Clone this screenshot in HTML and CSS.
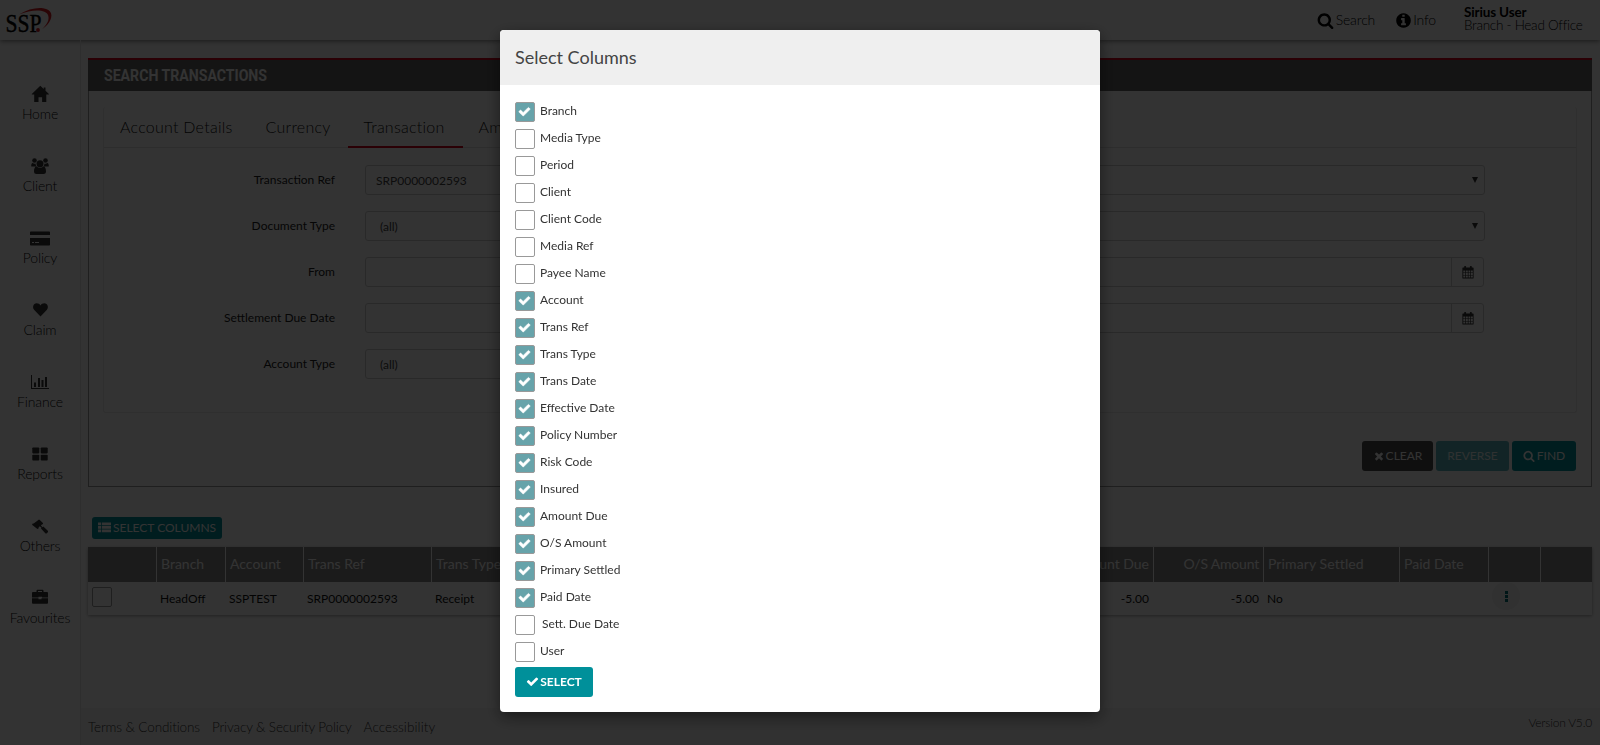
FILE: index.html
```html
<!DOCTYPE html>
<html lang="en">
<head>
<meta charset="utf-8">
<title>Search Transactions</title>
<link rel="stylesheet" href="styles.css">
</head>
<body>
<svg class="defs" width="0" height="0">
  <symbol id="check" viewBox="0 0 1792 1792"><path d="M1671 566q0 40-28 68l-724 724-136 136q-28 28-68 28t-68-28l-136-136-362-362q-28-28-28-68t28-68l136-136q28-28 68-28t68 28l294 295 656-657q28-28 68-28t68 28l136 136q28 28 28 68z"/></symbol>
  <symbol id="times" viewBox="0 0 1792 1792"><path d="M1490 1322q0 40-28 68l-136 136q-28 28-68 28t-68-28l-294-294-294 294q-28 28-68 28t-68-28l-136-136q-28-28-28-68t28-68l294-294-294-294q-28-28-28-68t28-68l136-136q28-28 68-28t68 28l294 294 294-294q28-28 68-28t68 28l136 136q28 28 28 68t-28 68l-294 294 294 294q28 28 28 68z"/></symbol>
  <symbol id="search" viewBox="0 0 1792 1792"><path d="M1216 832q0-185-131.500-316.500t-316.500-131.500-316.500 131.500-131.500 316.500 131.500 316.500 316.500 131.500 316.500-131.500 131.500-316.500zm512 832q0 52-38 90t-90 38q-54 0-90-38l-343-342q-179 124-399 124-143 0-273.500-55.500t-225-150-150-225-55.500-273.500 55.500-273.500 150-225 225-150 273.500-55.500 273.500 55.500 225 150 150 225 55.500 273.500q0 220-124 399l343 343q37 37 37 90z"/></symbol>
  <symbol id="info" viewBox="0 0 1792 1792"><path d="M1152 1376v-160q0-14-9-23t-23-9h-96v-512q0-14-9-23t-23-9h-320q-14 0-23 9t-9 23v160q0 14 9 23t23 9h96v320h-96q-14 0-23 9t-9 23v160q0 14 9 23t23 9h448q14 0 23-9t9-23zm-128-896v-160q0-14-9-23t-23-9h-192q-14 0-23 9t-9 23v160q0 14 9 23t23 9h192q14 0 23-9t9-23zm640 416q0 209-103 385.500t-279.500 279.500-385.500 103-385.500-103-279.500-279.500-103-385.500 103-385.500 279.500-279.500 385.500-103 385.500 103 279.500 279.500 103 385.500z"/></symbol>
  <symbol id="calendar" viewBox="0 0 12 13"><path fill-rule="evenodd" d="M1 1.500h1.200V.6q0-.6.700-.6h.6q.6 0 .6.600v.9h3.800V.6q0-.6.600-.6h.6q.7 0 .7.600v.9H11q.6 0 .6.600v9.800q0 .600-.6.600H1q-.6 0-.6-.6V2.100q0-.6.600-.6zM1.300 4.500v1.900h2V4.500zm2.700 0v1.900h1.800V4.500zm2.500 0v1.900h1.800V4.500zm2.500 0v1.900h1.800V4.500zM1.300 7v1.900h2V7zM4 7v1.900h1.800V7zm2.500 0v1.900h1.800V7zM9 7v1.900h1.800V7zM1.300 9.500v2h2v-2zm2.700 0v2h1.800v-2zm2.500 0v2h1.800v-2zm2.500 0v2h1.800v-2z"/></symbol>
</svg>

<header class="topbar">
  <svg class="logo" width="52" height="32" viewBox="0 0 52 32">
    <path class="red" d="M13 7.500C21 2.500 30 .4 37 1.200c9 1.300 10.500 7.300 6 14.300-1.900 3-4.500 5-7 6.700 5-4.500 7.600-9.200 6.200-13.700C40.200 2.800 28 1.400 13 7.500z"/>
    <text class="logo-text" x="-.5" y="24.500" textLength="36" lengthAdjust="spacingAndGlyphs">SSP</text>
    <circle class="red" cx="32" cy="23" r="1.900"/>
  </svg>
  <div class="top-links">
    <div class="top-link"><svg width="17" height="17"><use href="#search"/></svg><span>Search</span></div>
    <div class="top-link info"><svg width="17" height="17"><use href="#info"/></svg><span>Info</span></div>
    <div class="user"><b>Sirius User</b><span>Branch - Head Office</span></div>
  </div>
</header>

<div class="shell">
  <nav class="sidebar">
    <a class="nav"><svg width="20" height="20" viewBox="0 0 20 20"><path d="M10.300 1.800 1.800 9.900v.6h2.400V18h4.300v-4.800h3.600V18h4.200v-7.500h2.600v-.6l-3.400-3.200V3.600h-1.800v1.500z"/></svg><span>Home</span></a>
    <a class="nav"><svg width="20" height="20" viewBox="0 0 20 20"><circle cx="4.500" cy="4.500" r="2.300"/><circle cx="15.500" cy="4.500" r="2.300"/><circle cx="10" cy="7.800" r="3.500"/><path d="M1.200 10.300c0-2 .4-3.300 1.500-3.300.8.800 2.200 1 3 .5-.1 1.300.1 2 .8 3H2.300c-.7 0-1.100 0-1.100-.200zM18.800 10.300c0-2-.4-3.300-1.500-3.300-.8.800-2.200 1-3 .5.100 1.300-.1 2-.8 3h4.200c.7 0 1.100 0 1.100-.200zM4 15.500c0-3 .8-5 2.600-5 2 1.600 4.800 1.600 6.800 0 1.800 0 2.600 2 2.600 5 0 1.700-1 2.500-2.500 2.500h-7C5 18 4 17.200 4 15.500z"/></svg><span>Client</span></a>
    <a class="nav"><svg width="22" height="20" viewBox="0 0 22 20"><path fill-rule="evenodd" d="M1.800 3.500h18.400q.8 0 .8.800V7H1V4.300q0-.8.800-.8zM1 10h20v6.700q0 .8-.8.800H1.800q-.8 0-.8-.8zm2 4v1h2v-1zm3 0v1h4v-1z"/></svg><span>Policy</span></a>
    <a class="nav"><svg width="20" height="20" viewBox="0 0 20 20"><path d="M10.500 16.500 4.300 10C2 7.500 3.200 3.200 6.600 3.200c1.800 0 3.200.8 3.900 2.200.7-1.400 2.100-2.200 3.900-2.200 3.400 0 4.600 4.300 2.300 6.800z"/></svg><span>Claim</span></a>
    <a class="nav"><svg width="20" height="20" viewBox="0 0 20 20"><path d="M1 3h1v13h17v1H1zM4 10.500h2V15H4zM8 6h2v9H8zM11.500 8h2v7h-2zM15 5h2v10h-2z"/></svg><span>Finance</span></a>
    <a class="nav"><svg width="20" height="20" viewBox="0 0 20 20"><rect x="2.300" y="3.500" width="7" height="5.900" rx=".8"/><rect x="10.700" y="3.500" width="7" height="5.900" rx=".8"/><rect x="2.300" y="10.700" width="7" height="5.900" rx=".8"/><rect x="10.700" y="10.700" width="7" height="5.900" rx=".8"/></svg><span>Reports</span></a>
    <a class="nav low"><svg width="20" height="20" viewBox="0 0 20 20"><path d="m9 1.500.8.400 3.100 3.100.2.800-.9.700-.3.100-1 1 1.600 1.600.8-.6 4.500 4.200q.6.800 0 1.500l-1 1q-.8.500-1.500 0l-4.300-4.800.5-.7-1.700-1.500-1.200 1.300-.1.900-.8.500-.6-.2L2.300 7l-.2-.6.600-.8 1-.2 4.300-3.200z"/></svg><span>Others</span></a>
    <a class="nav"><svg width="20" height="20" viewBox="0 0 20 20"><path fill-rule="evenodd" d="M6.500 4V2.800q0-1 1-1h5q1 0 1 1V4h3.600q.9 0 .9.900V9.500h-6V8.800H8.500v.7H2V4.900Q2 4 2.900 4zM8 4h4V3H8zM2 10.300h6.500v1h3v-1H18v4.500q0 .9-.9.900H2.900q-.9 0-.9-.9z"/></svg><span>Favourites</span></a>
  </nav>

  <div class="main">
    <div class="content">
      <section class="panel">
        <h1 class="panel-title"><span>SEARCH TRANSACTIONS</span></h1>
        <div class="panel-body">
          <div class="tabbox">
            <div class="tabs"><a>Account Details</a><a>Currency</a><a class="active">Transaction</a><a>Amount</a></div>
            <div class="form">
              <label>Transaction Ref</label><div class="field">SRP0000002593</div><div class="field select"><i></i></div>
              <label>Document Type</label><div class="field all">(all)</div><div class="field select"><i></i></div>
              <label>From</label><div class="field"></div><div class="field date"><span><svg width="12" height="13"><use href="#calendar"/></svg></span></div>
              <label>Settlement Due Date</label><div class="field"></div><div class="field date"><span><svg width="12" height="13"><use href="#calendar"/></svg></span></div>
              <label>Account Type</label><div class="field all">(all)</div>
            </div>
          </div>
          <div class="actions">
            <button class="btn dark"><svg width="12" height="12"><use href="#times"/></svg>CLEAR</button>
            <button class="btn faded">REVERSE</button>
            <button class="btn find"><svg width="12" height="12"><use href="#search"/></svg>FIND</button>
          </div>
        </div>
      </section>

      <button class="btn small"><svg width="13" height="11" viewBox="0 0 13 11"><path d="M0 .5h3.200v2.800H0zM4 .5h9v2.800H4zM0 4h3.200v2.800H0zM4 4h9v2.800H4zM0 7.500h3.200v2.800H0zM4 7.500h9v2.800H4z"/></svg>SELECT COLUMNS</button>

      <table class="grid">
        <colgroup><col class="w69"><col class="w69"><col class="w78"><col class="w128"><col class="w90"><col class="w100"><col class="w110"><col class="w120"><col class="w100"><col class="w92"><col class="w110"><col class="w110"><col class="w136"><col class="w89"><col class="w52"><col class="w51"></colgroup>
        <thead><tr><th></th><th>Branch</th><th>Account</th><th>Trans Ref</th><th>Trans Type</th><th></th><th></th><th></th><th></th><th></th><th class="num">Amount Due</th><th class="num tight">O/S Amount</th><th class="loose">Primary Settled</th><th>Paid Date</th><th></th><th></th></tr></thead>
        <tbody><tr><td><span class="box"></span></td><td>HeadOff</td><td>SSPTEST</td><td>SRP0000002593</td><td>Receipt</td><td></td><td></td><td></td><td></td><td></td><td class="num">-5.00</td><td class="num">-5.00</td><td>No</td><td></td><td><span class="more"><i></i><i></i><i></i></span></td><td></td></tr></tbody>
      </table>
    </div>
    <footer class="footer">
      <div class="links"><span>Terms &amp; Conditions</span><span>Privacy &amp; Security Policy</span><span class="last">Accessibility</span></div>
      <span class="version">Version V5.0</span>
    </footer>
  </div>
</div>

<div class="backdrop">
  <div class="modal">
    <h2 class="modal-title">Select Columns</h2>
    <div class="modal-body">
      <div class="opt on"><span class="box"><svg width="13" height="13"><use href="#check"/></svg></span>Branch</div>
      <div class="opt"><span class="box"></span>Media Type</div>
      <div class="opt"><span class="box"></span>Period</div>
      <div class="opt"><span class="box"></span>Client</div>
      <div class="opt"><span class="box"></span>Client Code</div>
      <div class="opt"><span class="box"></span>Media Ref</div>
      <div class="opt"><span class="box"></span>Payee Name</div>
      <div class="opt on"><span class="box"><svg width="13" height="13"><use href="#check"/></svg></span>Account</div>
      <div class="opt on"><span class="box"><svg width="13" height="13"><use href="#check"/></svg></span>Trans Ref</div>
      <div class="opt on"><span class="box"><svg width="13" height="13"><use href="#check"/></svg></span>Trans Type</div>
      <div class="opt on"><span class="box"><svg width="13" height="13"><use href="#check"/></svg></span>Trans Date</div>
      <div class="opt on"><span class="box"><svg width="13" height="13"><use href="#check"/></svg></span>Effective Date</div>
      <div class="opt on"><span class="box"><svg width="13" height="13"><use href="#check"/></svg></span>Policy Number</div>
      <div class="opt on"><span class="box"><svg width="13" height="13"><use href="#check"/></svg></span>Risk Code</div>
      <div class="opt on"><span class="box"><svg width="13" height="13"><use href="#check"/></svg></span>Insured</div>
      <div class="opt on"><span class="box"><svg width="13" height="13"><use href="#check"/></svg></span>Amount Due</div>
      <div class="opt on"><span class="box"><svg width="13" height="13"><use href="#check"/></svg></span>O/S Amount</div>
      <div class="opt on"><span class="box"><svg width="13" height="13"><use href="#check"/></svg></span>Primary Settled</div>
      <div class="opt on"><span class="box"><svg width="13" height="13"><use href="#check"/></svg></span>Paid Date</div>
      <div class="opt indent"><span class="box"></span>Sett. Due Date</div>
      <div class="opt"><span class="box"></span>User</div>
      <button class="btn bold"><svg width="13" height="13"><use href="#check"/></svg>SELECT</button>
    </div>
  </div>
</div>
</body>
</html>
```
FILE: styles.css
```css
* { box-sizing: border-box; }
html, body { height: 745px; overflow: hidden; }
body { margin: 0; background: #fff; font-family: Lato, "Liberation Sans", sans-serif; font-size: 12px; color: #111; }
svg { fill: currentColor; flex: none; }
.defs { position: absolute; }

.topbar { height: 40px; display: flex; justify-content: space-between; padding: 7px 18px 0 6px; box-shadow: 0 1px 5px rgba(0,0,0,.5); font-size: 14px; }
.logo { color: #000; overflow: visible; }
.red { fill: #d71920; }
.logo-text { font-family: "Liberation Serif", serif; font-size: 25px; stroke: #000; stroke-width: .4px; }
.top-links { display: flex; font-weight: 300; color: #000; line-height: 13px; }
.top-link { display: flex; align-items: center; height: 26px; gap: 2px; margin-right: 20px; }
.top-link span { margin-top: -1px; letter-spacing: -.15px; }
.top-link.info { gap: 1px; margin-right: 28px; }
.user { display: flex; flex-direction: column; width: 118px; margin-top: -1px; font-size: 13.5px; white-space: nowrap; letter-spacing: -.27px; }
.user b { font-weight: 700; letter-spacing: -.15px; }

.shell { display: flex; height: 705px; }
.sidebar { width: 81px; flex: none; border-right: 1px solid #e6e6e6; padding-top: 44px; display: flex; flex-direction: column; }
.nav { height: 72px; display: flex; flex-direction: column; align-items: center; font-size: 14px; line-height: 17px; font-weight: 300; color: #0c0c0c; letter-spacing: -.15px; }
.nav svg { margin-bottom: 1px; color: #333; }
.nav.low svg { margin: 2px 0 -1px; }
.main { flex: 1; display: flex; flex-direction: column; min-width: 0; }
.content { flex: 1; padding: 18px 8px 0 7px; }

.panel { height: 429px; border: 1px solid #999; border-top: 0; }
.panel-title { margin: 0 -1px; height: 33px; border-top: 2px solid #d0021b; background: #646464; padding-left: 16px; color: #fff; font: 700 17px/31px Roboto, sans-serif; }
.panel-title span { display: inline-block; transform: scaleX(.83); transform-origin: left; }
.panel-body { padding: 16px 14px 0; }
.tabbox { height: 306px; border: 1px solid #e8e8e8; border-top: 0; border-radius: 3px; }
.tabs { display: flex; height: 41px; border-bottom: 1px solid #e0e0e0; font-size: 16px; line-height: 40px; color: #111; font-weight: 300; letter-spacing: .25px; }
.tabs a { padding: 0 17px 0 16px; height: 41px; }
.tabs a.active { padding-right: 18px; border-bottom: 2px solid #d0021b; }
.form { display: grid; grid-template-columns: 231px 385px 1fr; column-gap: 30px; row-gap: 16px; padding: 17px 91px 0 0; grid-auto-rows: 30px; }
.form label { text-align: right; line-height: 30px; grid-column: 1; color: #222; }
.field { border: 1px solid #ccc; border-radius: 3px; line-height: 30px; padding-left: 10px; font-size: 12px; color: #444; }
.field.all { padding-left: 14px; }
.field.select, .field.date { display: flex; justify-content: flex-end; align-items: center; }
.field.select i { border: 3px solid transparent; border-top: 6px solid #333; border-bottom: 0; margin-right: 6px; }
.field.date { margin-right: 1px; }
.field.date span { width: 32px; height: 100%; border-left: 1px solid #ccc; display: flex; align-items: center; justify-content: center; color: #333; }
.actions { display: flex; justify-content: flex-end; gap: 3px; padding: 28px 1px 0 0; }

.btn { display: inline-flex; align-items: center; justify-content: center; gap: 1px; border: 0; border-radius: 3px; height: 30px; padding: 0 0 1px; background: #00909a; color: #fff; font: 400 12px Lato, sans-serif; white-space: nowrap; }
.btn.dark { width: 71px; background: #4d4d4d; }
.btn.faded { width: 73px; background: #59b5bc; color: #e9f5f6; }
.btn.find { width: 64px; gap: 2px; }
.btn.bold { font-weight: 700; width: 78px; }
.btn.small { height: 22px; margin: 30px 0 8px 4px; padding: 0 6px 1px; display: flex; gap: 2px; }

.grid { width: 1504px; table-layout: fixed; border-collapse: separate; border-spacing: 0; box-shadow: 0 1px 3px rgba(0,0,0,.35); }
.grid th { height: 35px; background: #878787; border-right: 1px solid #fff; padding: 0 4px 2px; text-align: left; font-size: 14px; font-weight: 400; color: #fff; white-space: nowrap; }
.grid th:last-child { border-right: 0; }
.grid th.tight { letter-spacing: -.2px; }
.grid th.loose { letter-spacing: .1px; }
.grid td { height: 33px; padding: 0 3px; }
.grid td:first-child { padding: 0 4px; }
.grid .num { text-align: right; padding-right: 4px; }
.grid td.num { padding-right: 5px; }
.w69 { width: 69px; } .w78 { width: 78px; } .w128 { width: 128px; } .w90 { width: 90px; } .w100 { width: 100px; }
.w110 { width: 110px; } .w120 { width: 120px; } .w92 { width: 92px; } .w136 { width: 136px; } .w89 { width: 89px; } .w52 { width: 52px; } .w51 { width: 51px; }
.more { display: flex; flex-direction: column; align-items: center; justify-content: center; gap: 1px; width: 28px; height: 28px; margin-top: -5px; border-radius: 50%; background: #f3f3f3; }
.more i { width: 3px; height: 3px; background: #006d75; }

.box { display: flex; align-items: center; justify-content: center; width: 20px; height: 20px; border: 1px solid #999; border-radius: 2px; flex: none; }
.grid .box { margin-top: -3px; }

.footer { height: 37px; background: #f5f5f5; display: flex; justify-content: space-between; padding: 0 8px 0 7px; color: #333; }
.links { display: flex; gap: 12px; font-size: 13.5px; line-height: 38px; font-weight: 300; letter-spacing: -.12px; }
.links .last { letter-spacing: .1px; }
.version { font-size: 12px; font-weight: 300; line-height: 30px; letter-spacing: -.2px; }

.backdrop { position: fixed; inset: 0; background: rgba(0,0,0,.8); display: flex; justify-content: center; align-items: flex-start; padding-top: 30px; }
.modal { width: 600px; height: 682px; background: #fff; border-radius: 4px; overflow: hidden; box-shadow: 0 5px 15px rgba(0,0,0,.5); }
.modal-title { margin: 0; height: 55px; background: #efefef; padding-left: 15px; font-size: 18px; line-height: 55px; font-weight: 400; color: #444; }
.modal-body { padding: 15px; }
.opt { height: 27px; display: flex; align-items: flex-start; gap: 5px; line-height: 22px; color: #333; }
.opt .box { margin-top: 2px; }
.opt.indent { gap: 7px; }
.opt.on .box { background: #67a3aa; color: #fff; }
.opt.on svg { margin: -2px 1px 0 0; stroke: #fff; stroke-width: 60px; }
```
